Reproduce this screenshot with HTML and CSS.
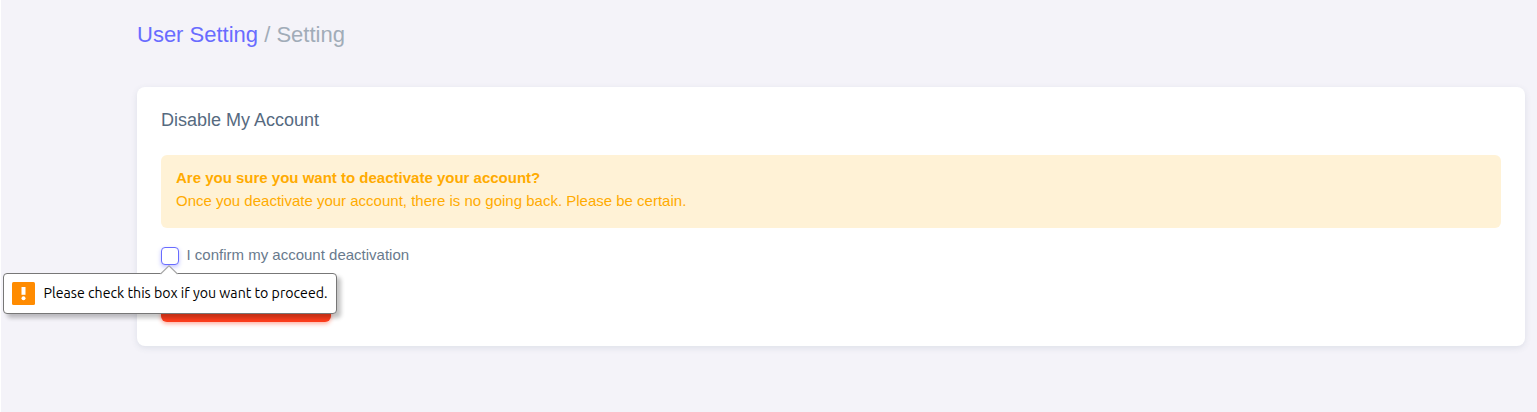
FILE: index.html
```html
<!DOCTYPE html>
<html lang="en">
<head>
<meta charset="utf-8">
<title>User Setting</title>
<link rel="stylesheet" href="styles.css">
</head>
<body>
<main class="content">
  <h4 class="page-title"><a class="crumb" href="#">User Setting</a> / Setting</h4>
  <section class="card">
    <h5 class="card-title">Disable My Account</h5>
    <div class="alert">
      <h6 class="alert-title">Are you sure you want to deactivate your account?</h6>
      <p class="alert-text">Once you deactivate your account, there is no going back. Please be certain.</p>
    </div>
    <div class="check-row">
      <span class="checkbox" role="checkbox" aria-checked="false"></span>
      <span class="check-label">I confirm my account deactivation</span>
    </div>
    <button class="btn-danger" type="submit"></button>
  </section>
</main>
<div class="popup">
  <svg class="popup-arrow" width="18" height="10" viewBox="0 0 18 10"><path d="M0.5 10V9L9 0.8L17.5 9V10Z" fill="#fff"/><path d="M0.5 9L9 0.8L17.5 9" fill="none" stroke="#a9a9a9" stroke-width="1.2"/></svg>
  <svg class="popup-icon" width="23" height="23" viewBox="0 0 23 23"><rect width="23" height="23" rx="1.5" fill="#ff8b00"/><path d="M9.5 5h4v7.8h-4z" fill="#fff"/><circle cx="11.5" cy="16.2" r="2" fill="#fff"/></svg>
  <span class="popup-text">Please check this box if you want to proceed.</span>
</div>
</body>
</html>
```
FILE: styles.css
```css
* { box-sizing: border-box; }
body {
  margin: 0;
  height: 412px;
  overflow: hidden;
  background: #f4f3f9;
  border-left: 1px solid #fff;
  font: 15px/22.95px "Liberation Sans", Arial, sans-serif;
  color: #697a8d;
}
.content { padding: 23px 12px 0 136px; }
.page-title {
  margin: 0 0 40px;
  font-size: 22px;
  line-height: 24px;
  font-weight: 400;
  color: #a1acb8;
}
.crumb { color: #696cff; text-decoration: none; }
.card {
  height: 259px;
  padding: 23px 24px 24px;
  background: #fff;
  border-radius: 8px;
  box-shadow: 0 2px 6px rgba(67, 89, 113, 0.12);
}
.card-title {
  margin: 0 0 25px;
  font-size: 18px;
  line-height: 20px;
  font-weight: 400;
  color: #566a7f;
}
.alert {
  height: 73px;
  padding: 11px 15px;
  background: #fff2d6;
  border-radius: 6px;
  color: #ffab00;
}
.alert-title { margin: 0; font-size: 15px; line-height: 23px; font-weight: 700; }
.alert-text { margin: 0; line-height: 23px; }
.check-row { display: flex; align-items: flex-start; gap: 7.5px; height: 23px; margin-top: 16px; }
.checkbox {
  width: 18px;
  height: 18px;
  margin-top: 3px;
  border: 1px solid #696cff;
  border-radius: 4px;
  background: #fff;
  box-shadow: 0 2px 4px rgba(105, 108, 255, 0.4);
}
.btn-danger {
  display: block;
  width: 170px;
  height: 38px;
  margin-top: 17px;
  border: 0;
  border-radius: 6px;
  background: #ff3e1d;
  box-shadow: 0 2px 4px rgba(255, 62, 29, 0.4);
}
.popup {
  position: absolute;
  left: 3px;
  top: 273px;
  width: 334px;
  height: 41px;
  display: flex;
  align-items: center;
  gap: 8px;
  padding-left: 8px;
  background: #fff;
  border: 1px solid #777;
  border-radius: 4px;
  box-shadow: 4px 4px 4px rgba(0, 0, 0, 0.24);
}
.popup-arrow { position: absolute; left: 156px; top: -9px; }
.popup-text {
  padding: 0 0 2px 0.5px;
  font: 14.18px/20px Ubuntu, "Noto Sans", sans-serif;
  color: #000;
  white-space: nowrap;
}
```
